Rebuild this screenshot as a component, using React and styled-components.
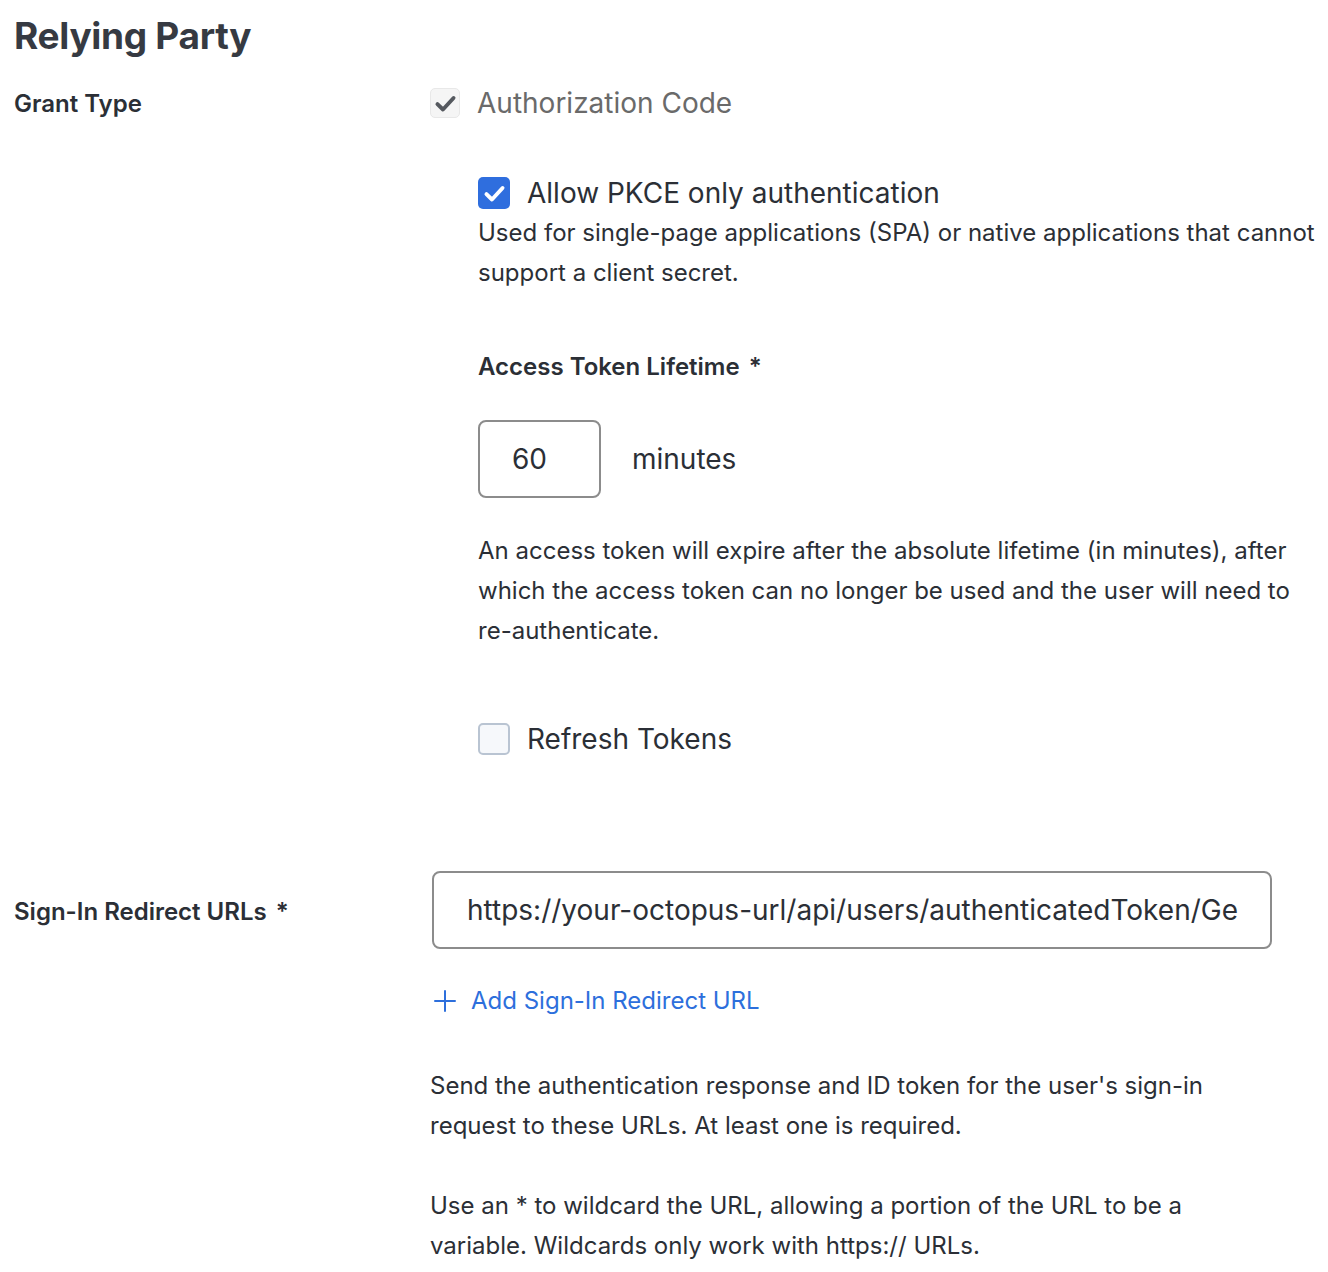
import React from 'react';
import styled, { createGlobalStyle } from 'styled-components';

const GlobalStyle = createGlobalStyle`
  body {
    margin: 0;
    background: #ffffff;
    font-family: 'Inter', 'Noto Sans', sans-serif;
    color: #2b2f36;
  }
`;

function Check({ color, size }) {
    return (
        <svg width={size} height={size} viewBox="0 0 20 20" fill="none">
            <path d="M3 10.5 L7.8 15.2 L17 5.2" stroke={color} strokeWidth="3.4" strokeLinecap="round" strokeLinejoin="round" />
        </svg>
    );
}

function App() {
    return (
        <Page>
            <GlobalStyle />
            <Title>Relying Party</Title>

            <Row>
                <Label>Grant Type</Label>
                <Field>
                    <CheckRow>
                        <Box variant="disabled"><Check color="#55595f" size={23} /></Box>
                        <CheckText muted>Authorization Code</CheckText>
                    </CheckRow>

                    <Nested>
                        <CheckRow>
                            <Box variant="checked"><Check color="#ffffff" size={23} /></Box>
                            <CheckText>Allow PKCE only authentication</CheckText>
                        </CheckRow>
                        <Help>
                            Used for single-page applications (SPA) or native applications that cannot support a client secret.
                        </Help>

                        <SubLabel>Access Token Lifetime <Star>*</Star></SubLabel>
                        <LifetimeRow>
                            <SmallInput>60</SmallInput>
                            <Unit>minutes</Unit>
                        </LifetimeRow>
                        <Help spaced>
                            An access token will expire after the absolute lifetime (in minutes), after which the access token can no longer be used and the user will need to re-authenticate.
                        </Help>

                        <CheckRow top="71px">
                            <Box />
                            <CheckText>Refresh Tokens</CheckText>
                        </CheckRow>
                    </Nested>
                </Field>
            </Row>

            <Row top="115px" center>
                <Label>Sign-In Redirect URLs <Star>*</Star></Label>
                <Field>
                    <UrlInput>https://your-octopus-url/api/users/authenticatedToken/Ge</UrlInput>
                </Field>
            </Row>
            <Row>
                <Label />
                <Field>
                    <AddLink>
                        <svg width="24" height="24" viewBox="0 0 24 24" fill="none">
                            <path d="M12 2 V22 M2 12 H22" stroke="#2d6fdc" strokeWidth="2" strokeLinecap="round" />
                        </svg>
                        Add Sign-In Redirect URL
                    </AddLink>
                    <Para>
                        Send the authentication response and ID token for the user's sign-in request to these URLs. At least one is required.
                    </Para>
                    <Para>
                        Use an * to wildcard the URL, allowing a portion of the URL to be a variable. Wildcards only work with https:// URLs.
                    </Para>
                </Field>
            </Row>
        </Page>
    );
}

const Page = styled.div`
    padding: 12px 0 20px 14px;
    width: 1328px;
    box-sizing: border-box;
`;

const Title = styled.h1`
    margin: 0 0 26px;
    font-size: 37px;
    line-height: 48px;
    font-weight: 700;
    color: #363a42;
    letter-spacing: -0.3px;
`;

const Row = styled.div`
    display: flex;
    align-items: ${p => (p.center ? 'center' : 'flex-start')};
    margin-top: ${p => p.top || '0'};
`;

const Label = styled.div`
    width: 416px;
    flex-shrink: 0;
    font-size: 24px;
    line-height: 30px;
    font-weight: 600;
    color: #2b2f36;
    padding-top: ${p => (p.children ? '3px' : '0')};
`;

const Field = styled.div`
    flex: 1;
    min-width: 0;
`;

const CheckRow = styled.div`
    display: flex;
    align-items: center;
    gap: 17px;
    margin-top: ${p => p.top || '0'};
`;

const Box = styled.div`
    width: ${p => (p.variant === 'disabled' ? '30px' : '32px')};
    height: ${p => (p.variant === 'disabled' ? '30px' : '32px')};
    box-sizing: border-box;
    border-radius: 5px;
    display: flex;
    align-items: center;
    justify-content: center;
    flex-shrink: 0;
    background: ${p =>
        p.variant === 'checked' ? '#2f6ede' : p.variant === 'disabled' ? '#f5f5f5' : '#f6f8fb'};
    border: ${p =>
        p.variant === 'checked' ? 'none' : p.variant === 'disabled' ? '1.5px solid #e8e8e8' : '2px solid #b9c4d2'};
`;

const CheckText = styled.span`
    font-size: 28px;
    line-height: 34px;
    color: ${p => (p.muted ? '#6a6a6a' : '#2b2f36')};
`;

const Nested = styled.div`
    margin: 56px 0 0 48px;
    max-width: 845px;
`;

const Help = styled.p`
    margin: ${p => (p.spaced ? '33px 0 0' : '3px 0 0')};
    font-size: 24px;
    line-height: 40px;
    color: #2b2f36;
`;

const SubLabel = styled.div`
    margin-top: 59px;
    font-size: 24px;
    line-height: 30px;
    font-weight: 600;
    color: #2b2f36;
`;

const Star = styled.span`
    margin-left: 3px;
    font-weight: 600;
`;

const LifetimeRow = styled.div`
    display: flex;
    align-items: center;
    gap: 31px;
    margin-top: 38px;
`;

const SmallInput = styled.div`
    width: 123px;
    height: 78px;
    box-sizing: border-box;
    border: 2px solid #8c8c8c;
    border-radius: 8px;
    padding-left: 32px;
    display: flex;
    align-items: center;
    font-size: 28px;
    color: #2b2f36;
`;

const Unit = styled.span`
    font-size: 28px;
    color: #2b2f36;
`;

const UrlInput = styled.div`
    width: 840px;
    height: 78px;
    box-sizing: border-box;
    margin-left: 2px;
    border: 2px solid #8c8c8c;
    border-radius: 8px;
    padding: 0 30px 0 33px;
    display: flex;
    align-items: center;
    overflow: hidden;
    white-space: nowrap;
    font-size: 28px;
    color: #2b2f36;
`;

const AddLink = styled.div`
    display: flex;
    align-items: center;
    gap: 14px;
    margin: 37px 0 0 3px;
    font-size: 24px;
    line-height: 30px;
    color: #2d6fdc;
    cursor: pointer;
`;

const Para = styled.p`
    margin: 50px 0 0;
    font-size: 24px;
    line-height: 40px;
    color: #2b2f36;
    width: 810px;

    & + & {
        margin-top: 40px;
    }
`;

export default App;
